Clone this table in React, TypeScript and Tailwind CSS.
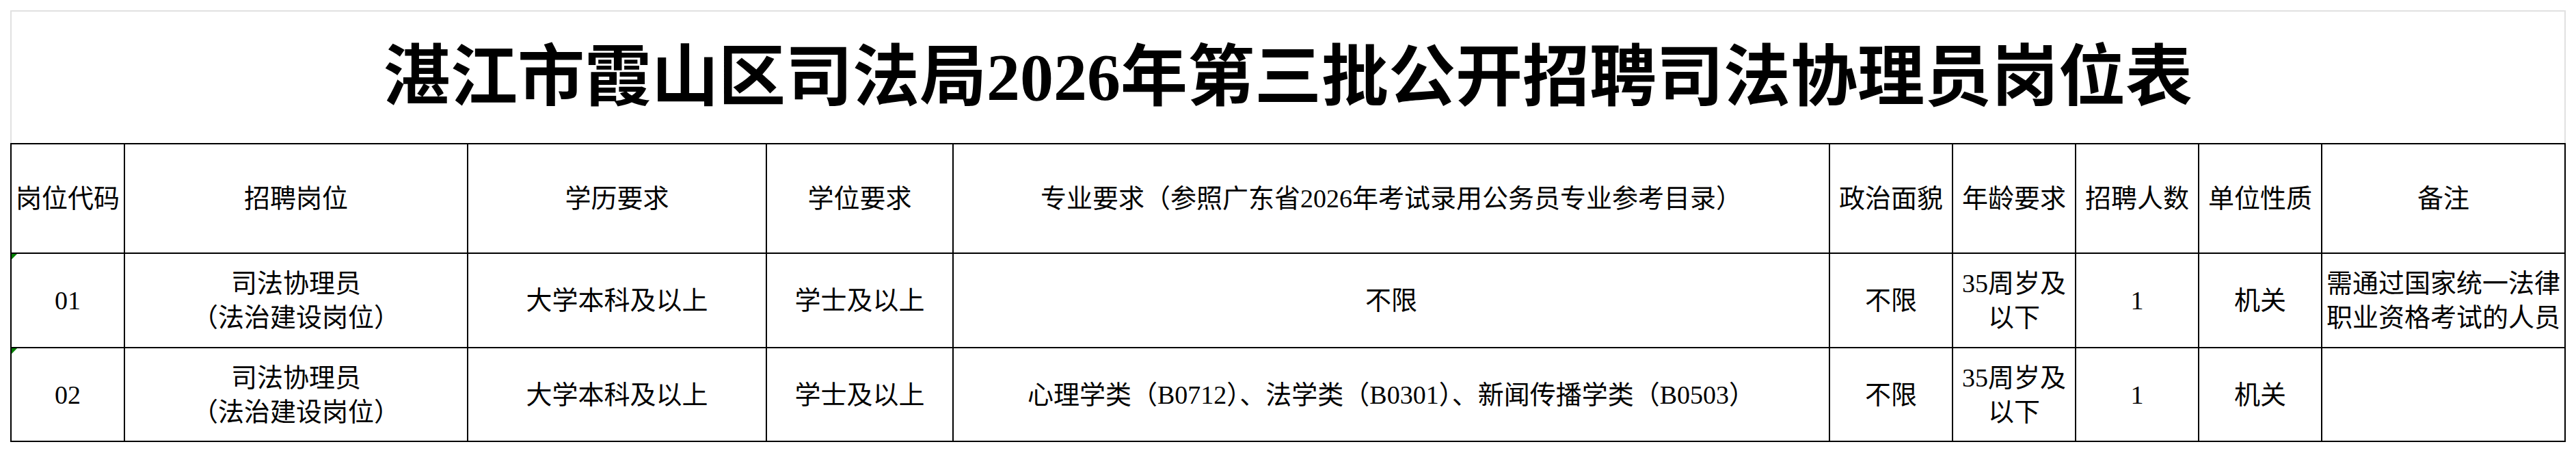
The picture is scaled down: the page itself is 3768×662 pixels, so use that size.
const header = [
  "岗位代码",
  "招聘岗位",
  "学历要求",
  "学位要求",
  "专业要求（参照广东省2026年考试录用公务员专业参考目录）",
  "政治面貌",
  "年龄要求",
  "招聘人数",
  "单位性质",
  "备注",
];

const rows = [
  {
    code: "01",
    major: "不限",
    note: "需通过国家统一法律职业资格考试的人员",
  },
  {
    code: "02",
    major: "心理学类（B0712）、法学类（B0301）、新闻传播学类（B0503）",
    note: "",
  },
];

function Cell({ children, flag }: { children?: React.ReactNode; flag?: boolean }) {
  return (
    <div className="relative flex items-center justify-center text-center border-r-2 border-b-2 border-black leading-[50px] px-1">
      {flag && (
        <svg className="absolute left-0 top-0" width="8" height="8" viewBox="0 0 8 8">
          <polygon points="0,0 8,0 0,8" fill="#008000" />
        </svg>
      )}
      {children}
    </div>
  );
}

export default function App() {
  return (
    <div
      className="min-h-[662px] bg-white pt-[15px] pl-[15px] text-black"
      style={{ fontFamily: '"Liberation Serif", "Noto Sans CJK SC", serif' }}
    >
      <div className="w-[3738px]">
        <div className="h-[194px] border-2 border-b-0 border-[#e1e1e1] flex items-center justify-center">
          <h1 className="text-[98px] leading-none font-bold whitespace-nowrap">
            湛江市霞山区司法局2026年第三批公开招聘司法协理员岗位表
          </h1>
        </div>

        <div className="grid grid-cols-[166px_502px_437px_273px_1282px_180px_180px_180px_180px_356px] grid-rows-[160px_138px_137px] border-t-2 border-l-2 border-black text-[38px]">
          {header.map((h) => (
            <Cell key={h}>
              <span className="whitespace-nowrap">{h}</span>
            </Cell>
          ))}

          {rows.map((r) => (
            <div key={r.code} className="contents">
              <Cell flag>{r.code}</Cell>
              <Cell>
                <div>
                  <div>司法协理员</div>
                  <div>（法治建设岗位）</div>
                </div>
              </Cell>
              <Cell>大学本科及以上</Cell>
              <Cell>学士及以上</Cell>
              <Cell>
                <span className="whitespace-nowrap">{r.major}</span>
              </Cell>
              <Cell>不限</Cell>
              <Cell>
                <span className="px-[6px]">35周岁及以下</span>
              </Cell>
              <Cell>1</Cell>
              <Cell>机关</Cell>
              <Cell>{r.note}</Cell>
            </div>
          ))}
        </div>
      </div>
    </div>
  );
}
